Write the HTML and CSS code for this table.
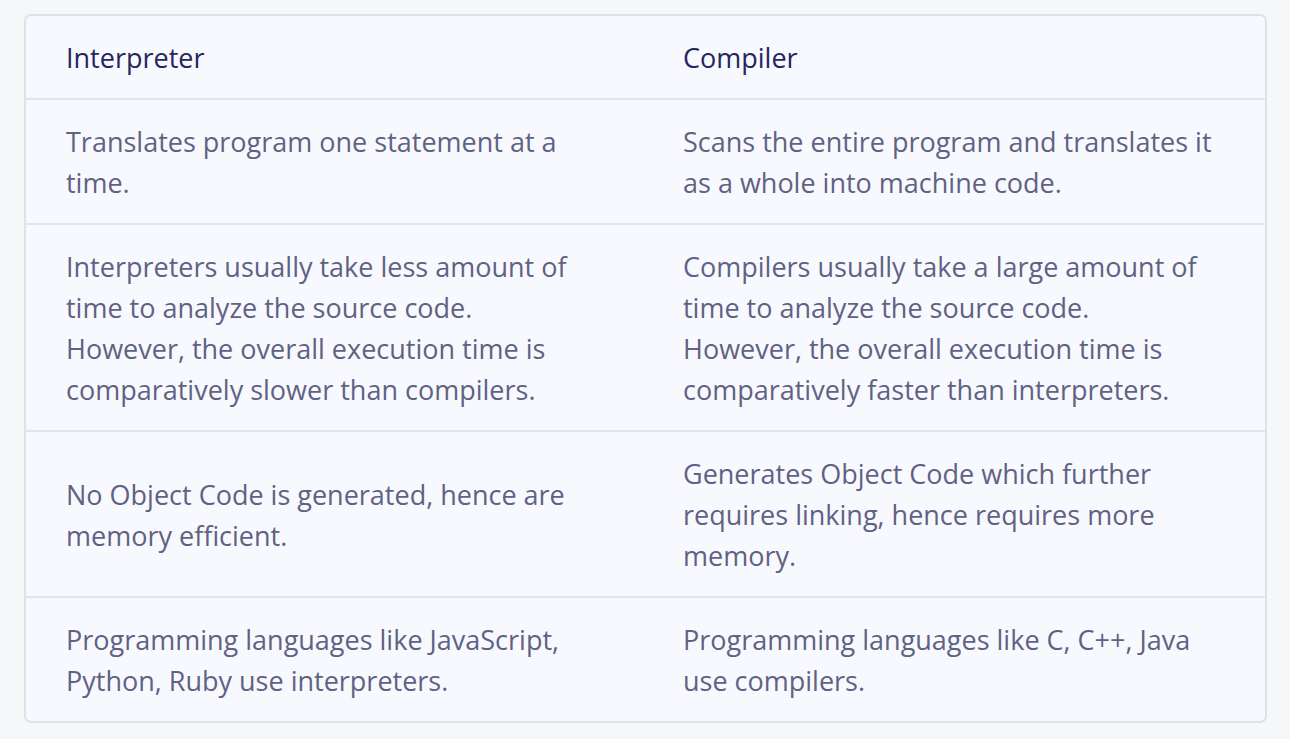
FILE: index.html
```html
<!DOCTYPE html>
<html lang="en">
<head>
<meta charset="utf-8">
<title>Interpreter vs Compiler</title>
<link rel="stylesheet" href="styles.css">
</head>
<body>
<div class="wrap">
<table class="cmp">
  <colgroup><col class="c1"><col class="c2"></colgroup>
  <thead>
    <tr><th>Interpreter</th><th>Compiler</th></tr>
  </thead>
  <tbody>
    <tr>
      <td>Translates program one statement at a time.</td>
      <td>Scans the entire program and translates it as a whole into machine code.</td>
    </tr>
    <tr>
      <td>Interpreters usually take less amount of time to analyze the source code.<br>However, the overall execution time is comparatively slower than compilers.</td>
      <td>Compilers usually take a large amount of time to analyze the source code.<br>However, the overall execution time is comparatively faster than interpreters.</td>
    </tr>
    <tr>
      <td>No Object Code is generated, hence are memory efficient.</td>
      <td>Generates Object Code which further requires linking, hence requires more memory.</td>
    </tr>
    <tr>
      <td>Programming languages like JavaScript, Python, Ruby use interpreters.</td>
      <td>Programming languages like C, C++, Java use compilers.</td>
    </tr>
  </tbody>
</table>
</div>
</body>
</html>
```
FILE: styles.css
```css
html, body {
  margin: 0;
  padding: 0;
  background: #f6f7f9;
}
body {
  font-family: "Open Sans", Lato, sans-serif;
}
.wrap {
  padding: 14px 23px 0 24px;
}
.cmp {
  width: 1243px;
  border-collapse: separate;
  border-spacing: 0;
  border: 2px solid #dde1e8;
  border-radius: 7px;
  background: #f8f9fe;
  table-layout: fixed;
}
.c1 { width: 617px; }
.cmp th, .cmp td {
  text-align: left;
  vertical-align: middle;
  padding: 21px 30px 20px 40px;
  font-size: 27px;
  line-height: 41px;
}
.cmp th {
  font-weight: 400;
  color: #25265e;
}
.cmp td {
  color: #5f6283;
  border-top: 2px solid #e3e5ea;
}
```
